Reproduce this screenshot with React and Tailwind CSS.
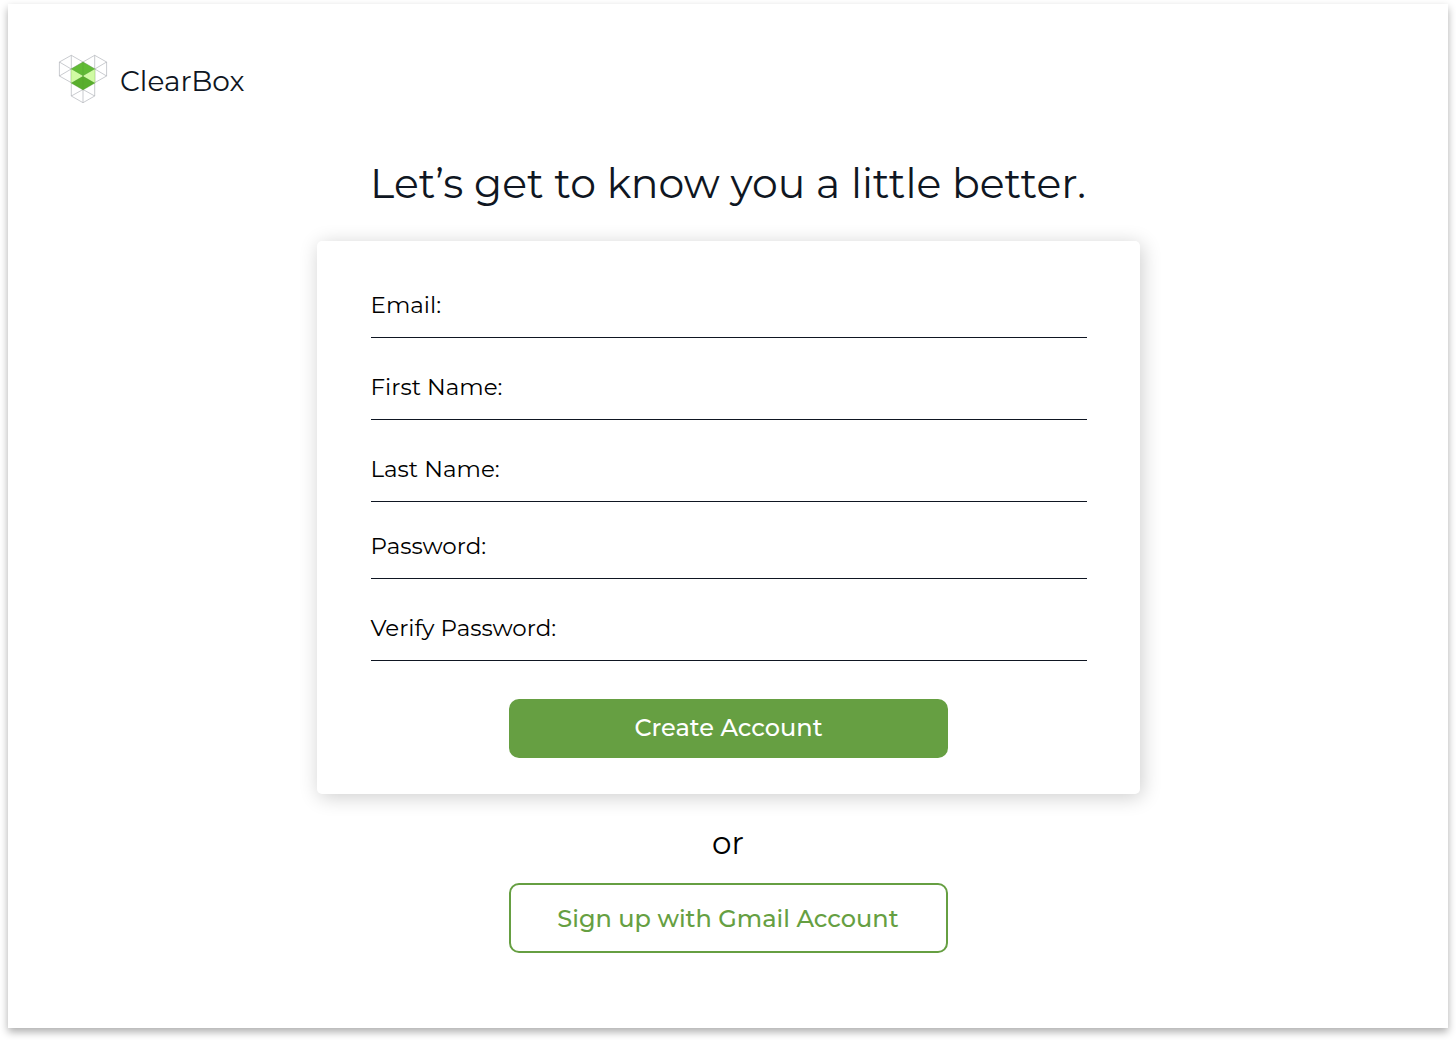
import React from "react";

const fields = [
  { id: "email", label: "Email:", type: "email", gap: "" },
  { id: "first-name", label: "First Name:", type: "text", gap: "mt-[35px]" },
  { id: "last-name", label: "Last Name:", type: "text", gap: "mt-[35px]" },
  { id: "password", label: "Password:", type: "password", gap: "mt-[30px]" },
  { id: "verify-password", label: "Verify Password:", type: "password", gap: "mt-[35px]" },
];

function Logo() {
  return (
    <svg viewBox="0 0 48 48" className="size-12 shrink-0 overflow-visible" fill="none" aria-hidden="true">
      <g stroke="#a4a7ae" strokeWidth="0.6" strokeLinejoin="round">
        <path d="M12.3 0.3 24 7V21L12.3 27.7 0.4 21V7ZM12.3 0.3V27.7M0.4 7 24 21M0.4 21 24 7" />
        <path d="M35.7 0.3 47.6 7V21L35.7 27.7 24 21V7ZM35.7 0.3V27.7M24 7 47.6 21M24 21 47.6 7" />
        <path d="M12.3 27.7V41L24 47.7 35.7 41V27.7M24 35V47.7M12.3 41 24 34.5 35.7 41" />
      </g>
      <path d="M12 14 24 21 12 28ZM36 14V28L24 21Z" fill="#d0fba3" />
      <path d="M24 7 36 14 24 21 12 14Z" fill="#61bb36" />
      <path d="M24 21 36 28 24 35 12 28Z" fill="#58ae2c" />
      <path d="M12 14 24 7 36 14V28L24 35 12 28ZM24 7V35" stroke="#4f8f35" strokeOpacity="0.5" strokeWidth="0.5" />
    </svg>
  );
}

function Field({ id, label, type, gap }) {
  return (
    <div className={`flex items-center gap-3 border-b border-[#0f1622] pb-[18px] ${gap}`}>
      <label htmlFor={id} className="text-[23px] leading-[28px] whitespace-nowrap">
        {label}
      </label>
      <input id={id} name={id} type={type} className="h-[28px] min-w-0 flex-1 bg-transparent text-[23px] outline-none" />
    </div>
  );
}

export default function App() {
  return (
    <div className="min-h-screen bg-white px-2 pt-1 pb-3 font-['Montserrat','Inter',sans-serif] text-black">
      <div className="flex min-h-[1024px] flex-col bg-white shadow-[0_4px_8px_rgba(0,0,0,0.32)]">
        <header className="flex items-center gap-[13px] px-[51px] pt-[51px]">
          <Logo />
          <span className="pt-1 text-[28px] leading-[36px] text-[#0f1622]">ClearBox</span>
        </header>
        <main className="flex flex-col items-center px-4">
          <h1 className="mt-[54px] text-center text-[41px] leading-[52px] text-[#0f1622]">
            Let’s get to know you a little better.
          </h1>
          <form
            className="mt-8 flex w-full max-w-[823px] flex-col rounded-[5px] bg-white pr-[53px] pl-[54px] pt-[50px] pb-[36px] shadow-[2px_3px_20px_rgba(0,0,0,0.2)]"
            onSubmit={(e) => e.preventDefault()}
          >
            {fields.map((f) => (
              <Field key={f.id} {...f} />
            ))}
            <button
              type="submit"
              className="mt-[38px] h-[59px] w-full max-w-[439px] self-center rounded-[10px] bg-[#669f42] pb-[2px] text-[24px] leading-[28px] font-medium text-white"
            >
              Create Account
            </button>
          </form>
          <p className="mt-[31px] text-[31px] leading-[36px]">or</p>
          <button
            type="button"
            className="mt-[22px] h-[70px] w-full max-w-[439px] rounded-[10px] border-2 border-[#669f42] bg-white pt-[2px] text-[24px] leading-[28px] font-medium text-[#669f42]"
          >
            Sign up with Gmail Account
          </button>
        </main>
      </div>
    </div>
  );
}
